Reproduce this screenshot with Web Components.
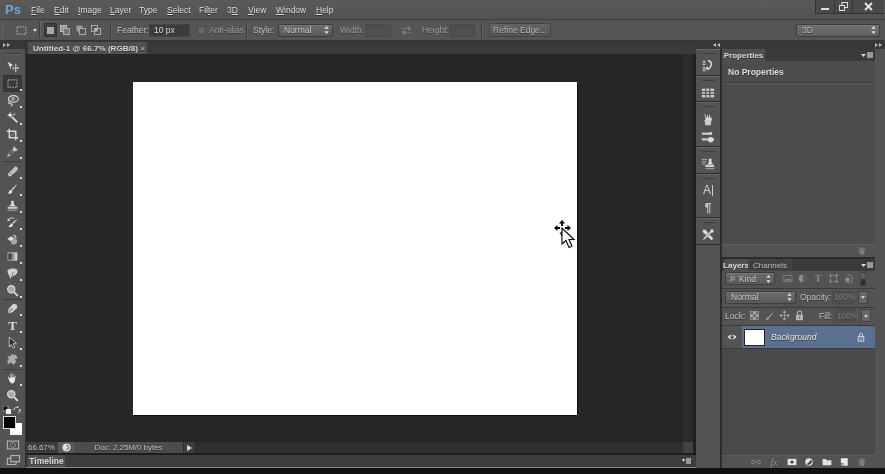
<!DOCTYPE html>
<html lang="en"><head><meta charset="utf-8"><title>Photoshop</title>
<style>
html,body{margin:0;padding:0;background:#111;overflow:hidden}
body{width:885px;height:474px;font:8.5px "Liberation Sans",sans-serif;color:#ddd}
</style></head><body>
<ps-app></ps-app>
<script>
const ICONS={
move:'<path d="M2 2l7 4.5-3 .8L6 12z" fill="#ddd"/><path d="M12 6.5v7M8.5 10h7" stroke="#ddd" fill="none"/><path d="M12 5l1.4 2h-2.8zM12 15l1.4-2h-2.8zM7.5 10l2-1.4v2.8zM16 10l-2-1.4v2.8z" fill="#ddd"/>',
marquee:'<rect x="2.5" y="3.5" width="11" height="9" fill="none" stroke="#d4d4d4" stroke-dasharray="2 1.4"/>',
lasso:'<ellipse cx="9" cy="6" rx="6" ry="4" fill="none" stroke="#d8d8d8" stroke-width="1.4"/><path d="M4 9c-2 2 0 3 2 3s2 2 0 3" fill="none" stroke="#d8d8d8" stroke-width="1.3"/><rect x="6" y="4" width="5" height="4" fill="#999"/>',
wand:'<path d="M7 7l7 7" stroke="#ddd" stroke-width="2"/><path d="M5 1l1 3 3 1-3 1-1 3-1-3-3-1 3-1z" fill="#eee"/><path d="M10 2l.5 1.5L12 4l-1.500.5L10 6l-.5-1.500L8 4l1.500-.5z" fill="#bbb"/>',
crop:'<path d="M4 1v11h11M1 4h11v11" fill="none" stroke="#d8d8d8" stroke-width="1.700"/><path d="M5 11l6-6" stroke="#aaa"/>',
eyedropper:'<path d="M10 2l4 4-2 1-1 0-6 6-3 1 1-3 6-6 0-1z" fill="#ccc" stroke="#ddd" stroke-width=".6"/><path d="M3 11l5-5 2 2-5 5z" fill="#555"/>',
heal:'<path d="M3 10l7-7a2.500 2.500 0 014 3l-7 7a2.500 2.500 0 01-4-3z" fill="#c8c8c8"/><path d="M4.500 9l4 4" stroke="#555"/><path d="M9 6l1 1M7.500 7.500l1 1" stroke="#777"/>',
brush:'<path d="M14.500 1.500L7 8.500l1.500 1.500z" fill="#ddd"/><path d="M6.500 9.500c-2 0-2.500 1.500-3 3-.3 1-1 1.500-2 1.500 3 1 6 0 6.500-3z" fill="#eee"/>',
stamp:'<path d="M6.500 2h3v4l2.500 3H4l2.500-3z" fill="#ddd"/><rect x="2" y="9.500" width="12" height="2.500" fill="#ccc"/><rect x="2" y="13" width="12" height="1.500" fill="#999"/>',
history:'<path d="M14.500 3L8 8l1.500 1.500z" fill="#ddd"/><path d="M7.500 9c-2 0-2 2-3 3l-2 1.500c3 .5 6 0 6-3z" fill="#eee"/><path d="M3 4.500C4.500 2 8 2 10 3" fill="none" stroke="#ddd" stroke-width="1.200"/><path d="M2 2.500v3.500h3.500z" fill="#ddd"/>',
eraser:'<path d="M1.500 7l5-3 4 3-5 3z" fill="#ddd"/><path d="M6 10l5-3 3 2-1 4-3 1h-3z" fill="#aaa"/><path d="M9 2l.8 2 2-.8-.8 2 2 .8-2 .8" fill="none" stroke="#ddd"/>',
gradient:'<defs><linearGradient id="g"><stop offset="0" stop-color="#111"/><stop offset="1" stop-color="#eee"/></linearGradient></defs><rect x="2.500" y="3.500" width="11" height="9" fill="url(#g)" stroke="#ccc"/>',
smudge:'<path d="M3 3c4-2 10-1 11 1s-1 5-3 6-3 1-4 2l-2 3c0-3-1-4-2-6S1 4 3 3z" fill="#cfcfcf"/><path d="M7 12l2-6" stroke="#777"/>',
zoom:'<circle cx="6.500" cy="6.500" r="4.500" fill="#aaa" stroke="#ddd" stroke-width="1.400"/><path d="M10 10l4.500 4.500" stroke="#ddd" stroke-width="2.200"/>',
pen:'<path d="M13 3L9 2 3.500 8 2 14l6-1.500L14 7z" fill="#d4d4d4"/><path d="M2.500 13.500L6.500 9.500" stroke="#555"/><circle cx="7" cy="9" r="1" fill="#555"/>',
path:'<path d="M4 1.500l9 8h-4.500l2.300 4.500-2 1-2.300-4.500L4 13.500z" fill="#222" stroke="#ddd"/>',
shape:'<path d="M7 2l5 1 2 3-4 1 2 4-3 3-2-3-4 2-1-3 2-3-2-2 4-1z" fill="#aaa" stroke="#ccc" stroke-width=".6"/>',
hand:'<path d="M3 9L2 6.500c0-1 1-1 1.500-.5L5 8V3c0-1 1.500-1 1.500 0v3.500V2c0-1 1.500-1 1.500 0v4.500V3c0-1 1.500-1 1.500 0v4l1-2c.5-1 1.500-.5 1.500.5l-1 5c-.3 2-1 3.500-2 3.500H7c-2 0-3-3-4-5z" fill="#eee" stroke="#444" stroke-width=".5"/>',
quick:'<rect x="1.500" y="3.500" width="13" height="9" fill="none" stroke="#ccc"/><circle cx="8" cy="8" r="2.700" fill="none" stroke="#ccc" stroke-dasharray="1.500 1"/>',
screen:'<rect x="1.500" y="6" width="10" height="7" fill="#555" stroke="#ccc"/><rect x="5.500" y="3" width="10" height="7" fill="#555" stroke="#ccc"/>',
swap:'<path d="M2 5.500h8M10 3l3.500 2.500L10 8zM14 10.500H6M6 8l-3.500 2.500L6 13z" fill="#7c7c7c" stroke="#7c7c7c"/>',
select:'<path d="M0 3l2.500-3L5 3zM0 6l2.500 3L5 6z" fill="#ddd"/>',
history2:'<path d="M2 2h3v2H2zM2 5h3v2H2zM2 9h3v2H2zM2 12h3v2H2z" fill="#bbb"/><path d="M8 2c4 0 5 5 2 8l-2 2" fill="none" stroke="#ddd" stroke-width="1.700"/><path d="M7 8l2 4-4 0z" fill="#ddd"/>',
swatches:'<rect x="1" y="3" width="14" height="10" fill="#ccc"/><path d="M1 6.500h14M1 9.500h14M5.500 3v10M10 3v10" stroke="#333"/>',
adjust:'<path d="M5 9V4l2 3V2l2 5 1-5 1 6 2-3-1 5z" fill="#ddd"/><path d="M4 9h8l-1 6H5z" fill="#ccc"/><path d="M4 2l2 6" stroke="#bbb"/>',
sliders:'<rect x="1" y="3" width="9" height="2.500" fill="#ccc"/><circle cx="11" cy="4" r="1.700" fill="#ddd"/><rect x="1" y="9.500" width="14" height="2.500" fill="#ccc"/><circle cx="11" cy="11" r="3" fill="#ddd"/>',
clone:'<path d="M1 3h6M1 5.500h5M1 8h4" stroke="#bbb"/><path d="M9 2h3v4l2 2.500H7L9 6z" fill="#ddd"/><rect x="5" y="9" width="10" height="2.500" fill="#ccc"/><rect x="5" y="12.500" width="10" height="1.500" fill="#999"/>',
tools:'<path d="M2 2l3 0 9 10-2 2L2 4.500z" fill="#ddd"/><path d="M14 2.500l-3 .5-8 8-1.500 3 3-1 8-8z" fill="#ccc" stroke="#444" stroke-width=".5"/><circle cx="12.500" cy="3.500" r="2" fill="#ddd"/>',
image:'<rect x="1.500" y="3.500" width="13" height="9" fill="none" stroke="#8a8a8a"/><path d="M3 11l3-3 2 2 2-3 3 4z" fill="#8a8a8a"/>',
halfc:'<circle cx="8" cy="8" r="5.500" fill="#8f8f8f"/><path d="M8 2.500a5.500 5.500 0 010 11z" fill="#5e5e5e"/>',
bounds:'<rect x="3.500" y="3.500" width="9" height="9" fill="none" stroke="#8f8f8f"/><path d="M2 2h3v3H2zM11 2h3v3h-3zM2 11h3v3H2zM11 11h3v3h-3z" fill="#8f8f8f"/>',
doc:'<path d="M5 3h5l2 2v9H4V8" fill="none" stroke="#8f8f8f"/><rect x="2" y="7" width="6" height="5" fill="#8f8f8f"/>',
lockpix:'<rect x="2" y="2" width="12" height="12" fill="#6a6a6a" stroke="#999"/><path d="M2 6h4v4H2zM6 2h4v4H6zM10 6h4v4h-4zM6 10h4v4H6z" fill="#a8a8a8"/>',
lockbrush:'<path d="M15 1L7 9l1.500 1.500z" fill="#a8a8a8"/><path d="M6.500 10c-2 0-2 2-3 3l-2 1c3 .7 6 0 6-3z" fill="#b4b4b4"/>',
lockmove:'<path d="M8 1l2 2.500H6zM8 15l2-2.500H6zM1 8l2.500 2V6zM15 8l-2.500 2V6zM8 3v10M3 8h10" fill="#a8a8a8" stroke="#a8a8a8"/>',
lock:'<rect x="3" y="7" width="10" height="8" rx="1" fill="#b8b8b8"/><path d="M5 7V4.500a3 3 0 016 0V7" fill="none" stroke="#b8b8b8" stroke-width="1.500"/><rect x="7" y="9.500" width="2" height="3" fill="#555"/>',
lockw:'<rect x="3.500" y="7.500" width="9" height="7" fill="none" stroke="#eee" stroke-width="1.300"/><path d="M5.500 7V4.500a2.500 2.500 0 015 0V7" fill="none" stroke="#eee" stroke-width="1.300"/><rect x="7" y="10" width="2" height="2" fill="#eee"/>',
eye:'<path d="M1 8c3-5 11-5 14 0-3 5-11 5-14 0z" fill="#ddd"/><circle cx="8" cy="8" r="2.700" fill="#333"/><circle cx="7" cy="7" r=".8" fill="#eee"/>',
search:'<circle cx="9.500" cy="6.500" r="3.500" fill="none" stroke="#ccc" stroke-width="1.200"/><path d="M7 9l-4 4" stroke="#ccc" stroke-width="1.500"/>',
trash:'<path d="M2 4h12v1.500H2zM6 2.500h4V4H6z" fill="#7e7e7e"/><path d="M3.500 6h9l-1 8h-7z" fill="#7e7e7e"/>',
link:'<path d="M6 5H4a3 3 0 000 6h2M10 5h2a3 3 0 010 6h-2M5 8h6" fill="none" stroke="#9a9a9a" stroke-width="1.300"/>',
mask:'<rect x="1" y="3" width="14" height="10" fill="#e8e8e8"/><circle cx="8" cy="8" r="2.500" fill="#333"/>',
adjlayer:'<circle cx="8" cy="8" r="6" fill="#e2e2e2"/><path d="M4 12L12 4A6 6 0 014 12z" fill="#444"/>',
folder:'<path d="M1 3h5l1.500 2H15v8H1z" fill="#e2e2e2"/>',
newlayer:'<path d="M3 2h11v12H7v-4H3z" fill="#e8e8e8"/><path d="M2 11h4v4z" fill="#bbb"/>',
};
function def(name,css,html,build){
  customElements.define(name,class extends HTMLElement{
    connectedCallback(){
      if(this.shadowRoot)return;
      const r=this.attachShadow({mode:'open'});
      r.innerHTML='<style>'+css+'</style>'+(build?build(this):html);
    }
  });
}
const pick=e=>e.getAttribute('name');
def('ps-icon',':host{display:inline-flex;width:var(--s,14px);height:var(--s,14px);flex:none}svg{display:block;width:100%;height:100%;overflow:visible}','',e=>'<svg viewBox="0 0 16 16" aria-hidden="true">'+(ICONS[pick(e)]||'')+'</svg>');

def('ps-sep',':host{display:block;width:1px;align-self:stretch;margin:3px 0;background:#3a3a3a;box-shadow:1px 0 0 #636363;flex:none}','<span></span>');

def('ps-select',`:host{display:flex;align-items:center;justify-content:space-between;box-sizing:border-box;height:13px;padding:0 3px 0 5px;border:1px solid #3c3c3c;border-radius:2px;background:linear-gradient(#6b6b6b,#5a5a5a);color:#ccc;font-size:8.5px;box-shadow:inset 0 1px 0 #777;flex:none}
svg{width:5px;height:8px;display:block}`,'',()=>'<slot></slot><svg viewBox="0 0 5 9">'+ICONS.select+'</svg>');

def('ps-field',`:host{display:flex;align-items:center;box-sizing:border-box;height:13px;padding-left:4px;background:#3b3b3b;border:1px solid #454545;color:#d8d8d8;font-size:8.5px;flex:none}
:host([dim]){background:#4f4f4f;border-color:#484848;color:#808080}`,'<slot></slot>');

def('ps-menubar',`:host{display:flex;align-items:center;height:19px;background:linear-gradient(#5a5a5a,#535353);box-sizing:border-box;padding-left:5px;color:#dcdcdc;font-size:8.5px;text-shadow:0 1px 0 #333}
b{font:bold 13px "Liberation Sans",sans-serif;color:#6fa6d6;width:26px;flex:none;text-shadow:none}
span{flex:none}
span u{text-decoration-thickness:1px;text-underline-offset:1px}
.ctl{margin-left:auto;display:flex;align-self:flex-start;height:13px;background:#4a4a4a;box-shadow:0 1px 0 #333;margin-right:1px}
.ctl i{display:flex;align-items:center;justify-content:center;border-left:1px solid #333}
.ctl i svg{display:block}`,`<b>Ps</b>
<span style="width:23px"><u>F</u>ile</span><span style="width:24px"><u>E</u>dit</span><span style="width:32px"><u>I</u>mage</span><span style="width:29px"><u>L</u>ayer</span><span style="width:28px">T<u>y</u>pe</span><span style="width:32px"><u>S</u>elect</span><span style="width:28px">Fil<u>t</u>er</span><span style="width:21px">3<u>D</u></span><span style="width:28px"><u>V</u>iew</span><span style="width:40px"><u>W</u>indow</span><span><u>H</u>elp</span>
<div class="ctl"><i style="width:18px"><svg width="8" height="8"><rect y="5" width="8" height="2" fill="#ddd"/></svg></i><i style="width:17px"><svg width="9" height="9"><rect x="3" y=".5" width="5.500" height="5" fill="none" stroke="#ddd"/><rect x=".5" y="3.500" width="5" height="5" fill="#4a4a4a" stroke="#ddd"/></svg></i><i style="width:31px"><svg width="9" height="9"><path d="M1 1l7 7M8 1L1 8" stroke="#e4e4e4" stroke-width="2"/></svg></i></div>`);

def('ps-optionsbar',`:host{display:flex;align-items:center;height:22px;box-sizing:border-box;background:#555;border-top:1px solid #3d3d3d;border-bottom:1px solid #333;color:#c4c4c4;font-size:8.5px;text-shadow:0 1px 0 #333;padding-left:2px}
.grip{width:3px;height:14px;border-left:1px dotted #777;margin:0 9px 0 0;flex:none}
ps-sep{margin:2px 0}
.d{color:#a0a0a0}
.pressed{display:flex;width:13px;height:14px;background:#3e3e3e;border:1px solid #333;box-sizing:border-box;align-items:center;justify-content:center;flex:none}
.s{flex:none;white-space:nowrap}
.chk{width:9px;height:9px;background:#656565;border:1px solid #4a4a4a;border-radius:1px;box-sizing:border-box;flex:none}
.btn{display:flex;align-items:center;justify-content:center;width:62px;height:14px;border:1px solid #444;background:linear-gradient(#636363,#565656);color:#b8b8b8;box-sizing:border-box;border-radius:1px;flex:none}
.gap{flex:none}
.arrow{width:0;height:0;border:2px solid transparent;border-top:3px solid #ddd;margin-top:3px;flex:none}`,
`<div class="grip"></div><ps-icon name="marquee" style="--s:13px"></ps-icon><span class="gap" style="width:5px"></span><span class="arrow"></span><span class="gap" style="width:2px"></span><ps-sep></ps-sep>
<span class="gap" style="width:4px"></span><span class="pressed"><svg width="7" height="7"><rect width="7" height="7" fill="#aaa"/></svg></span>
<span class="gap" style="width:3px"></span><svg width="11" height="10" style="flex:none"><rect x=".5" y=".5" width="6" height="6" fill="#999" stroke="#bbb"/><rect x="3.500" y="3.500" width="6" height="6" fill="#777" stroke="#aaa"/></svg>
<span class="gap" style="width:4.500px"></span><svg width="11" height="10" style="flex:none"><rect x=".5" y=".5" width="6" height="6" fill="#999"/><rect x="3.500" y="3.500" width="6" height="6" fill="#555" stroke="#aaa"/></svg>
<span class="gap" style="width:4.500px"></span><svg width="11" height="10" style="flex:none"><rect x=".5" y=".5" width="6" height="6" fill="#555" stroke="#aaa"/><rect x="3.500" y="3.500" width="6" height="6" fill="#555" stroke="#aaa"/><rect x="3.500" y="3.500" width="3" height="3" fill="#bbb"/></svg>
<span class="gap" style="width:8px"></span><ps-sep></ps-sep>
<span class="s" style="margin-left:6px;width:32px">Feather:</span><ps-field style="width:41px">10 px</ps-field>
<span class="gap" style="width:7px"></span><span class="chk"></span><span class="s d" style="margin-left:3px;width:37px">Anti-alias</span><ps-sep></ps-sep>
<span class="s" style="margin-left:6px;width:25px">Style:</span><ps-select style="width:55px">Normal</ps-select>
<span class="s d" style="margin-left:7px;width:26px">Width:</span><ps-field dim style="width:25px"></ps-field>
<span class="gap" style="width:9px"></span><ps-icon name="swap" style="--s:13px"></ps-icon><span class="gap" style="width:9px"></span>
<span class="s d" style="width:28px">Height:</span><ps-field dim style="width:25px"></ps-field>
<span class="gap" style="width:6px"></span><ps-sep></ps-sep><span class="gap" style="width:7px"></span><span class="btn">Refine Edge...</span>
<ps-select style="width:84px;margin-left:auto;margin-right:5px;color:#bbb;background:linear-gradient(#707070,#606060)">3D</ps-select>`);

def('ps-tool',`:host{display:flex;align-items:center;justify-content:center;width:19px;height:17px;flex:none;box-sizing:border-box;margin:0 0 0 3px;position:relative;--s:13px}
:host([active]){background:#393939;box-shadow:inset 0 0 0 1px #333}
:host([more])::after{content:"";position:absolute;right:0;bottom:1px;width:2px;height:2px;background:#ddd}
.t{font:bold 13px "Liberation Serif",serif;color:#ddd;line-height:13px}`,'',e=>{
  const n=pick(e);
  return n==='type'?'<span class="t">T</span>':'<ps-icon name="'+n+'"></ps-icon>';
});
def('ps-toolsep',':host{display:flex;align-items:center;height:3px;margin:0 3px;flex:none}i{display:block;height:1px;width:100%;background:#3d3d3d}','<i></i>');
def('ps-collapse',`:host{display:flex;align-items:center;justify-content:var(--j,flex-start);height:8px;background:#383838;box-sizing:border-box;padding:0 3px;flex:none}
i{display:block;width:0;height:0;border:2px solid transparent;border-left:3px solid #bbb;border-right:0;margin-right:1px}
:host([left]) i{border-left:0;border-right:3px solid #bbb}`,'<i></i><i></i>');

def('ps-toolbar',`:host{display:flex;flex-direction:column;width:26px;box-sizing:border-box;background:#535353;border-right:1px solid #2d2d2d;overflow:hidden}
.h{height:9px;display:flex;align-items:center;justify-content:center;flex:none}
.h i{display:block;width:15px;height:1px;background:#3c3c3c;box-shadow:0 1px 0 #666}
.sw{position:relative;height:23px;flex:none}
.fg,.bg{position:absolute;box-sizing:border-box;border:1px solid #ddd}
.fg{left:3px;top:0;width:13px;height:13px;background:#000;z-index:1}
.bg{left:10px;top:7px;width:12px;height:12px;background:#fff;border-color:#fff}
.top{height:12px;display:flex;align-items:center;justify-content:space-between;padding:0 4px 0 3px;flex:none}
.top svg{display:block}`,
`<ps-collapse></ps-collapse><div class="h"><i></i></div>
<ps-tool name="move"></ps-tool><ps-tool name="marquee" active more></ps-tool><ps-tool name="lasso" more></ps-tool><ps-tool name="wand" more></ps-tool><ps-tool name="crop" more></ps-tool><ps-tool name="eyedropper" more></ps-tool>
<ps-toolsep></ps-toolsep>
<ps-tool name="heal" more></ps-tool><ps-tool name="brush" more></ps-tool><ps-tool name="stamp" more></ps-tool><ps-tool name="history" more></ps-tool><ps-tool name="eraser" more></ps-tool><ps-tool name="gradient" more></ps-tool><ps-tool name="smudge" more></ps-tool><ps-tool name="zoom" more></ps-tool>
<ps-toolsep style="height:1px"></ps-toolsep>
<ps-tool name="pen" more></ps-tool><ps-tool name="type" more></ps-tool><ps-tool name="path" more></ps-tool><ps-tool name="shape" more></ps-tool>
<ps-toolsep style="height:2px"></ps-toolsep>
<ps-tool name="hand" more></ps-tool><ps-tool name="zoom"></ps-tool>
<div class="top"><svg width="8" height="8"><rect x="0" y="0" width="5" height="5" fill="#111" stroke="#ddd" stroke-width=".6"/><rect x="3" y="3" width="5" height="5" fill="#eee"/></svg><svg width="8" height="8"><path d="M1 4c0-2 2-3 4-3M5 7c1 0 2-1 2-3" fill="none" stroke="#ddd"/><path d="M4 0l2 1-2 1zM6 3l2 0-1 2z" fill="#ddd"/></svg></div>
<div class="sw"><div class="bg"></div><div class="fg"></div></div>
<div style="display:flex;justify-content:center;height:13px;align-items:center;flex:none;margin-top:-1px"><ps-icon name="quick" style="--s:14px"></ps-icon></div>
<div style="display:flex;justify-content:center;height:18px;align-items:center;flex:none"><ps-icon name="screen" style="--s:14px"></ps-icon></div>`);

def('ps-cursor',':host{position:absolute;left:415px;top:134px;width:30px;height:36px;display:block}svg{display:block}',
`<svg width="30" height="36" viewBox="0 0 30 36"><path d="M14 6v4M8 12h4M17 12h4" stroke="#000" stroke-width="1.800"/><path d="M14 4l3 3.500h-6zM14 20l-2.500-3.500h5zM6 12l3.500-3v6zM23 12l-3.500-3v6z" fill="#000"/><path d="M14 12v16l4-3.500 3 7 3-1.500-3-6.500 5 0z" fill="#fff" stroke="#000" stroke-width="1.100"/></svg>`);

def('ps-document',`:host{display:flex;flex-direction:column;width:670px;background:#262626;flex:none;min-height:0}
.tabs{display:flex;height:13px;background:#3a3a3a;padding-left:2px;flex:none;align-items:flex-end}
.tab{display:flex;align-items:center;width:119px;height:12px;background:#505050;color:#d8d8d8;box-sizing:border-box;padding-left:5px;font-size:8.100px;font-weight:bold;text-shadow:0 1px 0 #333;white-space:nowrap}
.tab span{margin-left:auto;margin-right:2px;font-weight:normal;color:#ccc}
.mid{display:flex;flex:1;min-height:0}
.area{flex:1;display:flex;align-items:center;justify-content:center;background:#262626}
.paper{position:relative;width:444px;height:333px;background:#fff;box-shadow:1px 1px 0 #0c0c0c}
.vs{width:10px;background:#2c2c2c;flex:none}.end{width:3px;background:#202020;flex:none}
.status{display:flex;height:11px;align-items:stretch;flex:none;background:#2f2f2f;color:#c8c8c8;font-size:7.900px;text-shadow:0 1px 0 #222}
.zoom{width:32px;padding-left:2px;display:flex;align-items:center;background:#3d3d3d;box-sizing:border-box}
.pb{width:16px;background:#5a5a5a;display:flex;align-items:center;justify-content:center}
.info{width:109px;background:#4c4c4c;display:flex;align-items:center;justify-content:center;color:#c0c0c0;margin:0 1px 0 0}
.tri{width:10px;background:#3f3f3f;display:flex;align-items:center;justify-content:center}
.tri i{display:block;width:0;height:0;border:3px solid transparent;border-left:5px solid #ddd;border-right:0}
.track{flex:1}.sq{width:10px;background:#424242}
.rule{height:2px;background:#1e1e1e;flex:none}
.tl{display:flex;height:12px;background:#3d3d3d;padding-left:2px;flex:none;align-items:stretch;justify-content:space-between;border-bottom:1px solid #888;box-sizing:content-box}
.tl b{display:flex;align-items:center;justify-content:center;width:37px;background:#515151;color:#ddd;font-size:8.5px;text-shadow:0 1px 0 #333}
.tl span{display:flex;align-items:center;gap:1px;margin-right:5px}`,
`<div class="tabs"><div class="tab">Untitled-1 @ 66.7% (RGB/8)<span>×</span></div></div>
<div class="mid"><div class="area"><div class="paper"><ps-cursor></ps-cursor></div></div><div class="vs"></div><div class="end"></div></div>
<div class="status"><div class="zoom">66.67%</div><div class="pb"><svg width="9" height="9"><circle cx="4.500" cy="4.500" r="4" fill="#ddd"/><path d="M4.500 2.500a2 2 0 110 4" fill="none" stroke="#555"/></svg></div><div class="info">Doc: 2.25M/0 bytes</div><div class="tri"><i></i></div><div class="track"></div><div class="sq"></div><div class="end"></div></div>
<div class="rule"></div>
<div class="tl"><b>Timeline</b><span><svg width="9" height="7"><path d="M0 1l3 0-1.500 3z" fill="#ddd"/><rect x="4" y="0" width="5" height="6" fill="#999"/></svg></span></div>`);

def('ps-dockgroup',`:host{display:flex;flex-direction:column;align-items:center;background:#535353;border-bottom:1px solid #2e2e2e;border-top:1px solid #666;box-sizing:border-box;flex:none;--s:14px}
i{display:block;width:13px;height:1px;background:#3c3c3c;margin:3px 0 3px;flex:none}
.c{flex:1;display:flex;flex-direction:column;align-items:center;justify-content:space-around;width:100%}`,'<i></i><div class="c"><slot></slot></div>');

def('ps-panelmenu',`:host{display:flex;align-items:center;gap:1px;margin-left:auto;margin-right:2px}
svg{display:block}`,'<svg width="5" height="5"><path d="M0 1h5L2.500 4z" fill="#ddd"/></svg><svg width="6" height="6"><rect width="6" height="6" fill="#999"/></svg>');

def('ps-properties',`:host{display:flex;flex-direction:column;height:208px;background:#4c4c4c;flex:none}
.tabs{display:flex;height:12px;background:#3a3a3a;flex:none;align-items:stretch}
.tab{display:flex;align-items:center;justify-content:center;width:43px;background:#4f4f4f;color:#d8d8d8;font-weight:bold;font-size:8px;text-shadow:0 1px 0 #333}
.head{height:21px;display:flex;align-items:center;padding-left:6px;font-weight:bold;color:#ddd;font-size:8.5px;border-bottom:1px solid #3a3a3a;box-shadow:0 1px 0 #5c5c5c;text-shadow:0 1px 0 #333;flex:none}
.body{flex:1}
.foot{height:12px;background:#535353;display:flex;align-items:center;justify-content:flex-end;padding-right:8px;flex:none;border-top:1px solid #5e5e5e;--s:10px}`,
`<div class="tabs"><div class="tab">Properties</div><ps-panelmenu></ps-panelmenu></div><div class="head">No Properties</div><div class="body"></div><div class="foot"><ps-icon name="trash"></ps-icon></div>`);

def('ps-layers',`:host{display:flex;flex-direction:column;flex:1;min-height:0;background:#4a4a4a;border-top:2px solid #2c2c2c;color:#bbb;font-size:8.5px;text-shadow:0 1px 0 #333}
.tabs{display:flex;height:12px;background:#3a3a3a;flex:none;align-items:stretch;padding-left:2px}
.tab{display:flex;align-items:center;justify-content:center;width:24px;background:#505050;color:#ddd;font-weight:bold;font-size:8px}
.tab.o{width:44px;background:#414141;color:#bdbdbd;font-weight:normal}
.r{display:flex;align-items:center;flex:none;box-sizing:border-box;padding:0 0 2px 3px;background:#535353;border-bottom:1px solid #3a3a3a;box-shadow:0 1px 0 #5e5e5e}
.f1{height:18px;--s:11px}.f2{height:19px}.f3{height:18px;--s:11px}
ps-icon{margin:0}
.tog{width:6px;height:14px;background:linear-gradient(#5e5e5e 50%,#2e2e2e 50%);border:1px solid #444;box-sizing:border-box;margin-left:5px;flex:none}
.lbl{color:#c0c0c0;flex:none}
.mini{width:10px;height:13px;background:#666;border:1px solid #444;box-sizing:border-box;display:flex;align-items:center;justify-content:center;margin-left:5px;flex:none}
.mini i{display:block;border:2px solid transparent;border-top:3px solid #ccc;margin-top:3px}
.row{display:flex;align-items:stretch;height:22px;flex:none;background:#535353;border-bottom:1px solid #3a3a3a}
.eye{width:20px;display:flex;align-items:center;justify-content:center;--s:10px;flex:none;border-right:0}
.sel{flex:1;background:#5a7290;display:flex;align-items:center;padding-left:2px;--s:10px}
.th{width:21px;height:17px;background:#fff;border:1px solid #222;box-sizing:border-box;flex:none}
.sel em{margin-left:6px;color:#e6e6e6;font-size:8.5px}
.sel ps-icon{margin-left:auto;margin-right:9px}
.list{flex:1}
.foot{height:12px;background:#535353;flex:none;display:flex;align-items:center;justify-content:flex-end;border-top:1px solid #5e5e5e;--s:10px;padding-right:8px;gap:7.600px}
.fx{width:10px;font:italic 10px "Liberation Serif",serif;color:#9a9a9a;text-align:center;flex:none}`,
`<div class="tabs"><div class="tab">Layers</div><div class="tab o">Channels</div><ps-panelmenu></ps-panelmenu></div>
<div class="r f1"><ps-select style="width:50px;padding-left:2px"><span style="display:flex;align-items:center;gap:3px;--s:8px"><ps-icon name="search"></ps-icon>Kind</span></ps-select><span style="width:6px;flex:none"></span><ps-icon name="image" style="margin-left:1px"></ps-icon><span style="width:4px;flex:none"></span><ps-icon name="halfc"></ps-icon><span style="width:5px;flex:none"></span><span style="width:10px;flex:none;font:bold 10px 'Liberation Serif',serif;color:#8f8f8f;text-align:center">T</span><span style="width:5px;flex:none"></span><ps-icon name="bounds"></ps-icon><span style="width:5px;flex:none"></span><ps-icon name="doc"></ps-icon><span class="tog"></span></div>
<div class="r f2"><ps-select style="width:71px">Normal</ps-select><span class="lbl" style="margin-left:4px;width:32px">Opacity:</span><ps-field dim style="width:21px;padding-left:1px;font-size:8.300px">100%</ps-field><span class="mini"><i></i></span></div>
<div class="r f3"><span class="lbl" style="width:24px">Lock:</span><ps-icon name="lockpix"></ps-icon><span style="width:4px;flex:none"></span><ps-icon name="lockbrush"></ps-icon><span style="width:4px;flex:none"></span><ps-icon name="lockmove"></ps-icon><span style="width:4px;flex:none"></span><ps-icon name="lock"></ps-icon><span class="lbl" style="margin-left:14px;width:16px">Fill:</span><ps-field dim style="width:21px;padding-left:1px;font-size:8.300px">100%</ps-field><span class="mini"><i></i></span></div>
<div class="row"><div class="eye"><ps-icon name="eye"></ps-icon></div><div class="sel"><div class="th"></div><em>Background</em><ps-icon name="lockw"></ps-icon></div></div>
<div class="list"></div>
<div class="foot"><ps-icon name="link"></ps-icon><span class="fx">fx</span><ps-icon name="mask"></ps-icon><ps-icon name="adjlayer"></ps-icon><ps-icon name="folder"></ps-icon><ps-icon name="newlayer"></ps-icon><ps-icon name="trash"></ps-icon></div>`);

def('ps-right',`:host{display:flex;flex-direction:column;flex:1;min-width:0;background:#2f2f2f}
.bar{display:flex;height:8px;background:#383838;align-items:center;justify-content:space-between;padding-left:17px;padding-right:2px;flex:none}
.body{display:flex;flex:1;min-height:0}
.dock{display:flex;flex-direction:column;width:24px;background:#535353;flex:none;border-right:2px solid #2c2c2c;box-sizing:content-box}
.panels{width:153px;display:flex;flex-direction:column;flex:none}
.edge{flex:1;background:#535353}`,
`<div class="bar"><ps-collapse left style="background:none;padding:0"></ps-collapse><ps-collapse style="background:none;padding:0"></ps-collapse></div>
<div class="body"><div class="dock">
<ps-dockgroup style="height:27px"><ps-icon name="history2"></ps-icon></ps-dockgroup>
<ps-dockgroup style="height:26px"><ps-icon name="swatches"></ps-icon></ps-dockgroup>
<ps-dockgroup style="height:45px"><ps-icon name="adjust"></ps-icon><ps-icon name="sliders"></ps-icon></ps-dockgroup>
<ps-dockgroup style="height:27px"><ps-icon name="clone"></ps-icon></ps-dockgroup>
<ps-dockgroup style="height:44px"><span style="display:flex;font:12px 'Liberation Sans',sans-serif;color:#c8c8c8;align-items:center;line-height:13px">A<i style="display:block;width:1px;height:11px;background:#ccc;margin-left:1px"></i></span><span style="font:bold 12px 'Liberation Sans',sans-serif;color:#c8c8c8;line-height:13px">¶</span></ps-dockgroup>
<ps-dockgroup style="height:27px"><ps-icon name="tools"></ps-icon></ps-dockgroup>
</div>
<div class="panels"><ps-properties></ps-properties><ps-layers></ps-layers></div>
<div class="edge"></div></div>`);

def('ps-app',`:host{display:flex;flex-direction:column;width:885px;height:474px;overflow:hidden;background:#0f0f0f;font:8.5px "Liberation Sans",sans-serif;color:#ddd;filter:blur(.3px)}
.main{display:flex;height:427px;flex:none}
.bottom{height:6px;background:#101010;flex:none}`,
`<ps-menubar></ps-menubar><ps-optionsbar></ps-optionsbar><div class="main"><ps-toolbar></ps-toolbar><ps-document></ps-document><ps-right></ps-right></div><div class="bottom"></div>`);
</script>
</body></html>
